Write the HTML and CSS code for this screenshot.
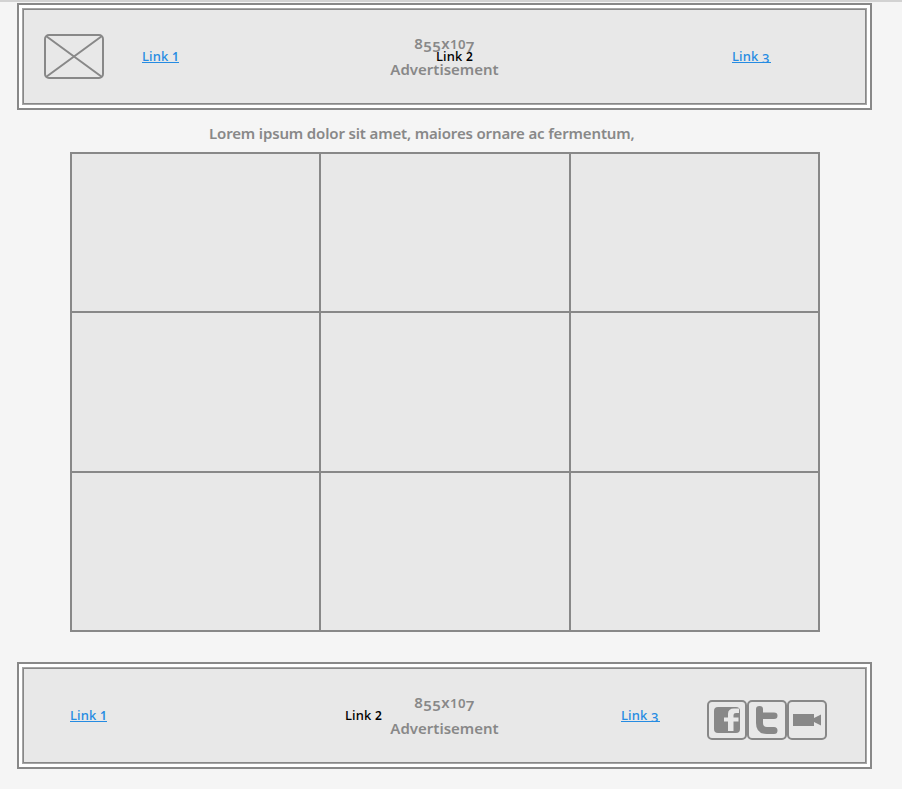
FILE: index.html
```html
<!DOCTYPE html>
<html lang="en">
<head>
<meta charset="utf-8">
<title>Wireframe</title>
<link rel="stylesheet" href="styles.css">
</head>
<body>
<header class="banner">
  <div class="panel">
    <p class="ad"><span class="size">8<span class="low">55</span>x<span class="mid">10</span><span class="low">7</span></span><span class="label">Advertisement</span></p>
    <nav class="links">
      <svg class="logo" width="60" height="45" viewBox="0 0 60 45" fill="none" stroke="#888" stroke-width="2"><rect x="1" y="1" width="58" height="43" rx="4"/><path d="M2 2 58 43M58 2 2 43"/></svg>
      <a class="link top-one" href="#">Link <span class="mid">1</span></a>
      <span class="link current top-two">Link <span class="mid">2</span></span>
      <a class="link top-three" href="#">Link <span class="low">3</span></a>
    </nav>
  </div>
</header>
<main>
  <h1 class="title">Lorem ipsum dolor sit amet, maiores ornare ac fermentum,</h1>
  <div class="gallery">
    <div class="cell"></div><div class="cell"></div><div class="cell"></div>
    <div class="cell"></div><div class="cell"></div><div class="cell"></div>
    <div class="cell"></div><div class="cell"></div><div class="cell"></div>
  </div>
</main>
<footer class="banner">
  <div class="panel">
    <p class="ad"><span class="size">8<span class="low">55</span>x<span class="mid">10</span><span class="low">7</span></span><span class="label">Advertisement</span></p>
    <nav class="links">
      <a class="link bottom-one" href="#">Link <span class="mid">1</span></a>
      <span class="link current bottom-two">Link <span class="mid">2</span></span>
      <a class="link bottom-three" href="#">Link <span class="low">3</span></a>
      <div class="social">
        <svg width="40" height="40" viewBox="0 0 40 40"><rect class="frame" x="1" y="1" width="38" height="38" rx="4"/><rect x="7" y="7" width="26" height="26" rx="4"/><path class="cut" d="M21 31V21.500H17V17.500H21V14Q21 8.500 27 8.500H32V13H29Q26.500 13 26.500 15V17.500H31.500V21.500H26.500V31Z"/></svg>
        <svg width="40" height="40" viewBox="0 0 40 40"><rect class="frame" x="1" y="1" width="38" height="38" rx="4"/><path d="M9 9Q9 6 12.500 6T16 9V12.500H27Q30.500 12.500 30.500 15.700T27 19H16V23Q16 27 20 27H27Q30.500 27 30.500 30.500T27 34H20Q9 34 9 23Z"/></svg>
        <svg width="40" height="40" viewBox="0 0 40 40"><rect class="frame" x="1" y="1" width="38" height="38" rx="4"/><path d="M6 14H27V18L34 14.500V25.500L27 22V26H6Z"/></svg>
      </div>
    </nav>
  </div>
</footer>
</body>
</html>
```
FILE: styles.css
```css
* { box-sizing: border-box; }
body {
  margin: 0;
  height: 789px;
  overflow: hidden;
  padding-top: 1px;
  border-top: 2px solid #d2d2d2;
  background: #f5f5f5;
  font-family: "Noto Sans", sans-serif;
  color: #888;
}
.banner {
  width: 855px;
  height: 107px;
  margin-left: 17px;
  padding: 3px;
  border: 2px solid #888;
  background: #fff;
}
.panel {
  display: grid;
  height: 97px;
  border: 1px solid #a5a5a5;
  outline: 1px solid #888;
  outline-offset: -2px;
  background: #e8e8e8;
}
.ad, .links { grid-area: 1 / 1; margin: 0; }
.ad {
  display: flex;
  flex-direction: column;
  align-items: center;
  padding-top: 21px;
  font-size: 15px;
  font-weight: 600;
  line-height: 26px;
}
.size, .label { height: 26px; white-space: nowrap; }
.size { letter-spacing: .4px; }
.label { letter-spacing: 0; }
.links { display: flex; align-items: center; padding-bottom: 1px; }
.logo { flex: none; margin-left: 21px; }
.link {
  flex: none;
  height: 20px;
  font-size: 13px;
  font-weight: 500;
  line-height: 20px;
  letter-spacing: .15px;
  white-space: nowrap;
  color: #258be2;
  text-decoration: none;
  background: linear-gradient(#258be2, #258be2) 0 16px / 100% 1px no-repeat;
}
.current { color: #000; background: none; }
.mid { font-size: .88em; font-weight: 600; line-height: 1; }
.low { display: inline-block; font-size: 1em; line-height: 1; transform: translateY(3px); }
.link .low { transform: translateY(2px); }
.link .mid { font-size: .92em; }
.top-one { width: 37px; margin-left: 38px; }
.top-two { width: 39px; margin-left: 257px; }
.top-three { width: 39px; margin-left: 257px; }
.title {
  width: 427px;
  height: 42px;
  margin: 0 0 0 209px;
  padding-top: 11px;
  font-size: 15px;
  font-weight: 600;
  line-height: 24px;
  letter-spacing: -.15px;
  white-space: nowrap;
}
.gallery {
  display: grid;
  grid-template-columns: 247fr 248fr 247fr;
  grid-template-rows: 157fr 158fr 157fr;
  gap: 2px;
  width: 750px;
  height: 480px;
  margin: 0 0 30px 70px;
  padding: 2px;
  background: #888;
}
.cell { background: #e8e8e8; }
.bottom-one { width: 37px; margin-left: 47px; }
.bottom-two { width: 39px; margin-left: 238px; }
.bottom-three { width: 39px; margin-left: 237px; }
.social { display: flex; margin-left: 47px; padding-top: 10px; }
.social svg { display: block; fill: #888; }
.social .frame { fill: none; stroke: #888; stroke-width: 2; }
.social .cut { fill: #e8e8e8; }
```
